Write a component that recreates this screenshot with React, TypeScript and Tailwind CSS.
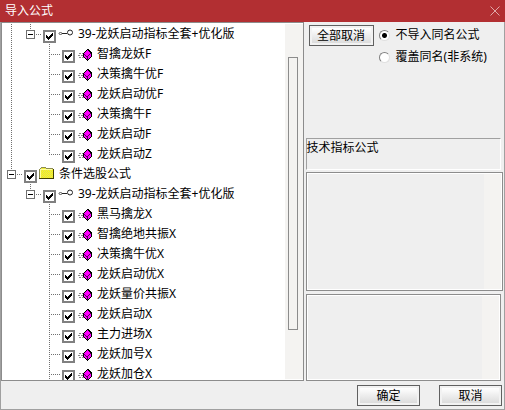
import { useState } from "react";

type NodeKind = "folder" | "group" | "formula";
type Guide = "none" | "line" | "tee" | "end" | "box";
type TreeNode = { id: number; kind: NodeKind; name: string; guides: Guide[] };

const item = (id: number, name: string, root: Guide, own: Guide = "tee"): TreeNode => ({
	id,
	kind: "formula",
	name,
	guides: [root, "none", own],
});

const nodes: TreeNode[] = [
	{ id: 0, kind: "group", name: "39-龙妖启动指标全套+优化版", guides: ["line", "box"] },
	item(1, "智擒龙妖F", "line"),
	item(2, "决策擒牛优F", "line"),
	item(3, "龙妖启动优F", "line"),
	item(4, "决策擒牛F", "line"),
	item(5, "龙妖启动F", "line"),
	item(6, "龙妖启动Z", "line", "end"),
	{ id: 7, kind: "folder", name: "条件选股公式", guides: ["box"] },
	{ id: 8, kind: "group", name: "39-龙妖启动指标全套+优化版", guides: ["none", "box"] },
	item(9, "黑马擒龙X", "none"),
	item(10, "智擒绝地共振X", "none"),
	item(11, "决策擒牛优X", "none"),
	item(12, "龙妖启动优X", "none"),
	item(13, "龙妖量价共振X", "none"),
	item(14, "龙妖启动X", "none"),
	item(15, "主力进场X", "none"),
	item(16, "龙妖加号X", "none"),
	item(17, "龙妖加仓X", "none"),
];

const GuideCell = ({ guide }: { guide: Guide }) => (
	<svg
		className="w-[19px] h-5 shrink-0 overflow-visible"
		viewBox="0 0 19 20"
		shapeRendering="crispEdges"
		fill="none"
		stroke="#707070"
	>
		{(guide === "line" || guide === "tee") && <path d="M9.5 0V20" strokeDasharray="1 1" />}
		{guide === "end" && <path d="M9.5 0V11" strokeDasharray="1 1" />}
		{(guide === "tee" || guide === "end") && <path d="M9 10.5H20" strokeDasharray="1 1" />}
		{guide === "box" && (
			<>
				<path d="M9.5 0V6M15 10.5H21" strokeDasharray="1 1" />
				<rect x="5.5" y="6.5" width="8" height="8" fill="#fff" />
				<path d="M7 10.5H12" stroke="#000" />
			</>
		)}
	</svg>
);

const FolderIcon = () => (
	<svg className="w-4 h-5 shrink-0" viewBox="0 0 16 20" shapeRendering="crispEdges">
		<defs>
			<pattern id="dither" width="2" height="2" patternUnits="userSpaceOnUse">
				<path d="M0 0h2v2H0z" fill="#ffff00" />
				<path d="M0 0h1v1H0zM1 1h1v1H1z" fill="#dcd870" />
			</pattern>
		</defs>
		<path d="M0 5h1V4h1V3h5v1h1v1h6v10H0z" fill="url(#dither)" />
		<path d="M0.500 5V15M1 4.500H2M2 3.500H7M7 4.500H14" stroke="#8c8c50" fill="none" />
		<path d="M1 5.500H13M1.500 6V14" stroke="#ffffa0" fill="none" />
		<path d="M14.500 5V15M0 14.500H15" stroke="#404000" fill="none" />
	</svg>
);

const GroupIcon = () => (
	<svg className="w-4 h-5 shrink-0" viewBox="0 0 16 20" fill="none" stroke="#222">
		<ellipse cx="2.500" cy="9.500" rx="1.500" ry="1" stroke="#555" />
		<path d="M4 9.500H9" />
		<circle cx="12" cy="8.500" r="2.500" />
	</svg>
);

const FormulaIcon = () => (
	<svg className="w-4 h-5 shrink-0" viewBox="0 0 16 20" shapeRendering="crispEdges">
		<path d="M2 9.500H6M1 11.500H6M2 13.500H7" stroke="#8c8c8c" strokeDasharray="2 1" />
		<path
			d="M10 5h2v1h1v1h1v1h1v5h-1v1h-1v1h-1v1h-1v1h-1v-1H9v-1H8v-1H7v-1H6V9h1V8h1V7h1V6h1z"
			fill="#000"
		/>
		<path d="M10 6h1v1h1v1h1v1h1v4h-1v1h-1v1h-1v1h-1v-1H9v-1H8v-1H7V9h1V8h1V7h1z" fill="#ff00ff" />
		<path
			d="M7 10h1v1H7zM8 11h1v1H8zM9 12h1v1H9zM10 12h1v4h-1zM11 11h1v1h-1zM12 10h1v1h-1zM13 9h1v1h-1z"
			fill="#500050"
		/>
	</svg>
);

const icons = { folder: FolderIcon, group: GroupIcon, formula: FormulaIcon };

const TreeRow = ({ node }: { node: TreeNode }) => {
	const Icon = icons[node.kind];
	return (
		<li className="flex h-5">
			{node.guides.map((guide, i) => (
				<GuideCell key={i} guide={guide} />
			))}
			<label className="flex h-5 pl-[3px]">
				<span className="grid size-[13px] mt-1.5 mr-0.5">
					<input
						type="checkbox"
						defaultChecked
						className="peer col-start-1 row-start-1 appearance-none size-[13px] border-2 border-[#808080] bg-white"
					/>
					<svg
						className="col-start-1 row-start-1 size-[13px] z-10 pointer-events-none invisible peer-checked:visible"
						viewBox="0 0 13 13"
						shapeRendering="crispEdges"
					>
						<path d="M3 5h1v1h1v1h1V6h1V5h1V4h1V3h1v3H9v1H8v1H7v1H6v1H5V9H4V8H3z" />
					</svg>
				</span>
				<Icon />
				<span className="pl-1 leading-5 whitespace-nowrap">{node.name}</span>
			</label>
		</li>
	);
};

const Button = ({ children }: { children: string }) => (
	<button type="button" className="h-[21px] w-full border border-[#606060] bg-[#f2f2f2] p-0.5 leading-4">
		<span className="block h-full bg-linear-to-b from-white to-[#dcdcdc]">{children}</span>
	</button>
);

const RadioOption = ({
	label,
	checked,
	onSelect,
}: {
	label: string;
	checked: boolean;
	onSelect: () => void;
}) => (
	<label className="flex items-center gap-1.5 h-5 whitespace-nowrap">
		<input
			type="radio"
			name="mode"
			checked={checked}
			onChange={onSelect}
			className="appearance-none size-[11px] rounded-full border border-[#808080] border-b-[#e0e0e0] border-r-[#e0e0e0] bg-white checked:bg-[radial-gradient(circle,#000_2px,#fff_3px)]"
		/>
		{label}
	</label>
);

export default function App() {
	const [mode, setMode] = useState("skip");

	return (
		<main className="h-screen min-h-72 flex flex-col bg-[#efefef] text-black text-[12px] font-['Noto_Sans','Noto_Sans_CJK_SC',sans-serif]">
			<header className="h-[22px] shrink-0 flex items-center justify-between bg-[#b22f32] text-white px-[5px]">
				<h1 className="leading-5">导入公式</h1>
				<button type="button" aria-label="关闭">
					<svg className="size-[10px]" viewBox="0 0 10 10" stroke="#e0a8a8" fill="none">
						<path d="M.5.500l9 9M9.500.500l-9 9" />
					</svg>
				</button>
			</header>
			<div className="flex-1 min-h-0 flex flex-col border border-t-0 border-[#a0a0a0]">
				<div className="flex-1 min-h-0 flex">
					<div className="flex-[303] min-w-0 flex border border-[#8c8c8c] bg-white overflow-hidden">
						<ul className="flex-1 min-w-0 pt-px overflow-hidden">
							{nodes.map((node) => (
								<TreeRow key={node.id} node={node} />
							))}
						</ul>
						<div className="w-[18px] my-px shrink-0 bg-[#f4f3f1] pt-[33px] pb-[49px] px-[3px]">
							<div className="h-full w-[10px] border border-[#8c8c8c]" />
						</div>
					</div>
					<div className="flex-[200] min-w-0 flex flex-col pl-0.5">
						<div className="flex gap-[5px] pt-[3px] pl-[3px] h-[116px] shrink-0">
							<div className="w-[65px] shrink-0">
								<Button>全部取消</Button>
							</div>
							<fieldset className="flex flex-col gap-0.5">
								<RadioOption
									label="不导入同名公式"
									checked={mode === "skip"}
									onSelect={() => setMode("skip")}
								/>
								<RadioOption
									label="覆盖同名(非系统)"
									checked={mode === "overwrite"}
									onSelect={() => setMode("overwrite")}
								/>
							</fieldset>
						</div>
						<p className="h-8 shrink-0 mr-[3px] mb-0.5 border border-[#a0a0a0] border-b-white border-r-white leading-[18px]">
							技术指标公式
						</p>
						<div className="flex-[115] mr-px mb-[3px] flex border border-[#8c8c8c] bg-white p-px">
							<div className="flex-1 bg-[#efefef]" />
							<div className="w-[17px] bg-[#f4f3f1]" />
						</div>
						<div className="flex-[83] mr-[3px] flex border border-[#8c8c8c] bg-white p-px">
							<div className="flex-1 bg-[#efefef]" />
							<div className="w-[17px] bg-[#f4f3f1]" />
						</div>
					</div>
				</div>
				<footer className="flex justify-end gap-[19px] pt-1 pb-[3px] pr-0.5">
					<div className="w-[63px]">
						<Button>确定</Button>
					</div>
					<div className="w-[63px]">
						<Button>取消</Button>
					</div>
				</footer>
			</div>
		</main>
	);
}
